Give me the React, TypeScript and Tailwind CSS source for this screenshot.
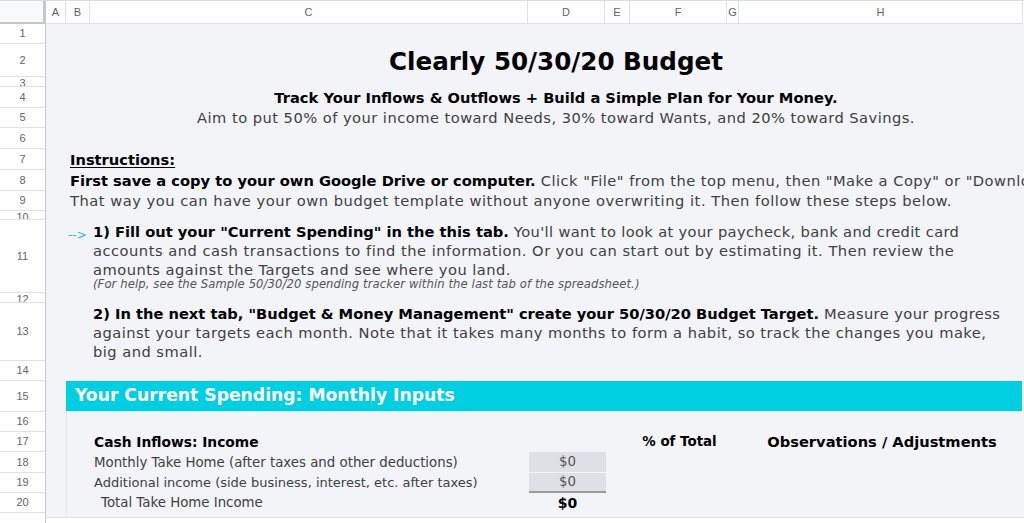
import React from "react";

const rowHeights = [
  "h-[20px]", "h-[33px]", "h-[10px]", "h-[21px]", "h-[20px]", "h-[21px]", "h-[21px]", "h-[21px]", "h-[20px]", "h-[9px]",
  "h-[73px]", "h-[10px]", "h-[58px]", "h-[20px]", "h-[31px]", "h-[20px]", "h-[20px]", "h-[21px]", "h-[20px]", "h-[20px]",
];
const shortRows = [2, 9, 11];

const cols: { l: string; w: string }[] = [
  { l: "A", w: "w-[20px]" },
  { l: "B", w: "w-[24px]" },
  { l: "C", w: "w-[438px]" },
  { l: "D", w: "w-[77px]" },
  { l: "E", w: "w-[25px]" },
  { l: "F", w: "w-[97px]" },
  { l: "G", w: "w-[12px]" },
  { l: "H", w: "w-[284px]" },
];

export default function App() {
  return (
    <div className="w-[1024px] h-[523px] overflow-hidden bg-white font-['DejaVu_Sans',sans-serif]">
      {/* column header */}
      <div className="flex h-[24px] border-t border-[#dadce0] font-['Liberation_Sans',Arial,sans-serif] text-[11px] text-[#5f6368]">
        <div className="w-[46px] shrink-0 bg-[#f8f9fa] border-r-[3px] border-b-2 border-[#c4c7c5]" />
        {cols.map((c) => (
          <div
            key={c.l}
            className={`${c.w} shrink-0 flex items-center justify-center border-r border-b border-[#e1e1e1]`}
          >
            {c.l}
          </div>
        ))}
      </div>

      <div className="flex h-[499px]">
        {/* row header */}
        <div className="w-[46px] shrink-0 border-r border-[#c4c7c5] font-['Liberation_Sans',Arial,sans-serif] text-[11px] text-[#666]">
          {rowHeights.map((h, i) => (
            <div
              key={i}
              className={`${h} flex justify-center overflow-hidden border-b border-[#e1e1e1] ${
                shortRows.includes(i) ? "items-start leading-[12px]" : "items-center"
              }`}
            >
              {i + 1}
            </div>
          ))}
          <div className="h-[10px]" />
        </div>

        {/* content */}
        <div className="flex-1 overflow-hidden">
          <div className="bg-[#f3f4f8] text-[#404040]">
            <div className="h-[20px]" />
            <div className="h-[33px] ml-[20px] w-[980px] flex items-center justify-center pt-[3px] text-[24.6px] font-bold text-black whitespace-nowrap">
              Clearly 50/30/20 Budget
            </div>
            <div className="h-[10px]" />
            <div className="h-[21px] ml-[20px] w-[980px] flex items-center justify-center text-[14.67px] font-bold text-black whitespace-nowrap">
              Track Your Inflows &amp; Outflows + Build a Simple Plan for Your Money.
            </div>
            <div className="h-[20px] ml-[20px] w-[980px] flex items-center justify-center text-[14.67px] tracking-[0.47px] whitespace-nowrap">
              Aim to put 50% of your income toward Needs, 30% toward Wants, and 20% toward Savings.
            </div>
            <div className="h-[21px]" />
            <div className="h-[21px] pl-[24px] flex items-center text-[14.67px] font-bold text-black underline underline-offset-2 whitespace-nowrap">
              Instructions:
            </div>
            <div className="h-[21px] pl-[24px] flex items-center text-[14.67px] whitespace-nowrap">
              <span className="font-bold text-black">First save a copy to your own Google Drive or computer.</span>
              <span className="tracking-[0.47px]">&nbsp;Click "File" from the top menu, then "Make a Copy" or "Download".</span>
            </div>
            <div className="h-[20px] pl-[24px] flex items-center text-[14.67px] tracking-[0.52px] whitespace-nowrap">
              That way you can have your own budget template without anyone overwriting it. Then follow these steps below.
            </div>
            <div className="h-[9px]" />
            <div className="h-[73px] flex">
              <div className="w-[20px] shrink-0" />
              <div className="w-[24px] shrink-0 pl-[2px] pt-[6px] leading-[19px] text-[12px] text-[#27b9dc] whitespace-nowrap">
                --&gt;
              </div>
              <div className="pl-[3px] pt-[2px] text-[14.67px] leading-[19px] whitespace-nowrap">
                <div>
                  <span className="font-bold text-black">1) Fill out your "Current Spending" in the this tab.</span>
                  <span className="tracking-[0.35px]"> You'll want to look at your paycheck, bank and credit card</span>
                </div>
                <div className="tracking-[0.5px]">accounts and cash transactions to find the information. Or you can start out by estimating it. Then review the</div>
                <div className="tracking-[0.47px]">amounts against the Targets and see where you land.</div>
                <div className="text-[11.6px] leading-[11px] italic text-[#555] tracking-[0.1px]">
                  (For help, see the Sample 50/30/20 spending tracker within the last tab of the spreadsheet.)
                </div>
              </div>
            </div>
            <div className="h-[10px]" />
            <div className="h-[58px] pl-[47px] pt-[1px] text-[14.67px] leading-[19px] whitespace-nowrap">
              <div>
                <span className="font-bold text-black">2) In the next tab, "Budget &amp; Money Management" create your 50/30/20 Budget Target.</span>
                <span className="tracking-[0.4px]"> Measure your progress</span>
              </div>
              <div className="tracking-[0.47px]">against your targets each month. Note that it takes many months to form a habit, so track the changes you make,</div>
              <div className="tracking-[0.47px]">big and small.</div>
            </div>
            <div className="h-[20px]" />
            <div className="h-[31px] ml-[20px] w-[956px] flex items-center pl-[9px] bg-[#00cfe1] border-b border-[#c8f1f6] text-[17.2px] font-bold text-white whitespace-nowrap">
              Your Current Spending: Monthly Inputs
            </div>

            {/* table */}
            <div className="ml-[20px] border-l border-[#e4e5ea]">
              <div className="h-[20px]" />
              <div className="h-[20px] flex items-center whitespace-nowrap">
                <div className="w-[24px] shrink-0" />
                <div className="w-[438px] shrink-0 pl-[3px] text-[13.8px] font-bold text-black">Cash Inflows: Income</div>
                <div className="w-[77px] shrink-0" />
                <div className="w-[25px] shrink-0" />
                <div className="w-[97px] shrink-0 text-center text-[13.4px] font-bold text-black">% of Total</div>
                <div className="w-[12px] shrink-0" />
                <div className="w-[284px] shrink-0 text-center text-[14.67px] font-bold text-black">Observations / Adjustments</div>
              </div>
              <div className="h-[21px] flex whitespace-nowrap text-[13.33px]">
                <div className="w-[24px] shrink-0" />
                <div className="w-[438px] shrink-0 pl-[3px] flex items-center">Monthly Take Home (after taxes and other deductions)</div>
                <div className="w-[77px] shrink-0 flex items-center justify-center bg-[#dfe0e6] border-b border-[#f3f4f8] text-[#555]">$0</div>
              </div>
              <div className="h-[20px] flex whitespace-nowrap text-[13.33px]">
                <div className="w-[24px] shrink-0" />
                <div className="w-[438px] shrink-0 pl-[3px] flex items-center text-[13px]">Additional income (side business, interest, etc. after taxes)</div>
                <div className="w-[77px] shrink-0 flex items-center justify-center bg-[#dfe0e6] border-b-2 border-[#9a9a9a] text-[#555]">$0</div>
              </div>
              <div className="h-[20px] flex whitespace-nowrap text-[13.33px]">
                <div className="w-[24px] shrink-0" />
                <div className="w-[438px] shrink-0 pl-[10px] flex items-center">Total Take Home Income</div>
                <div className="w-[77px] shrink-0 flex items-center justify-center font-bold text-black text-[14px]">$0</div>
              </div>
            </div>
            <div className="h-[4px]" />
          </div>
          <div className="h-[6px] bg-white border-t border-[#e1e1e1]" />
        </div>
      </div>
    </div>
  );
}
